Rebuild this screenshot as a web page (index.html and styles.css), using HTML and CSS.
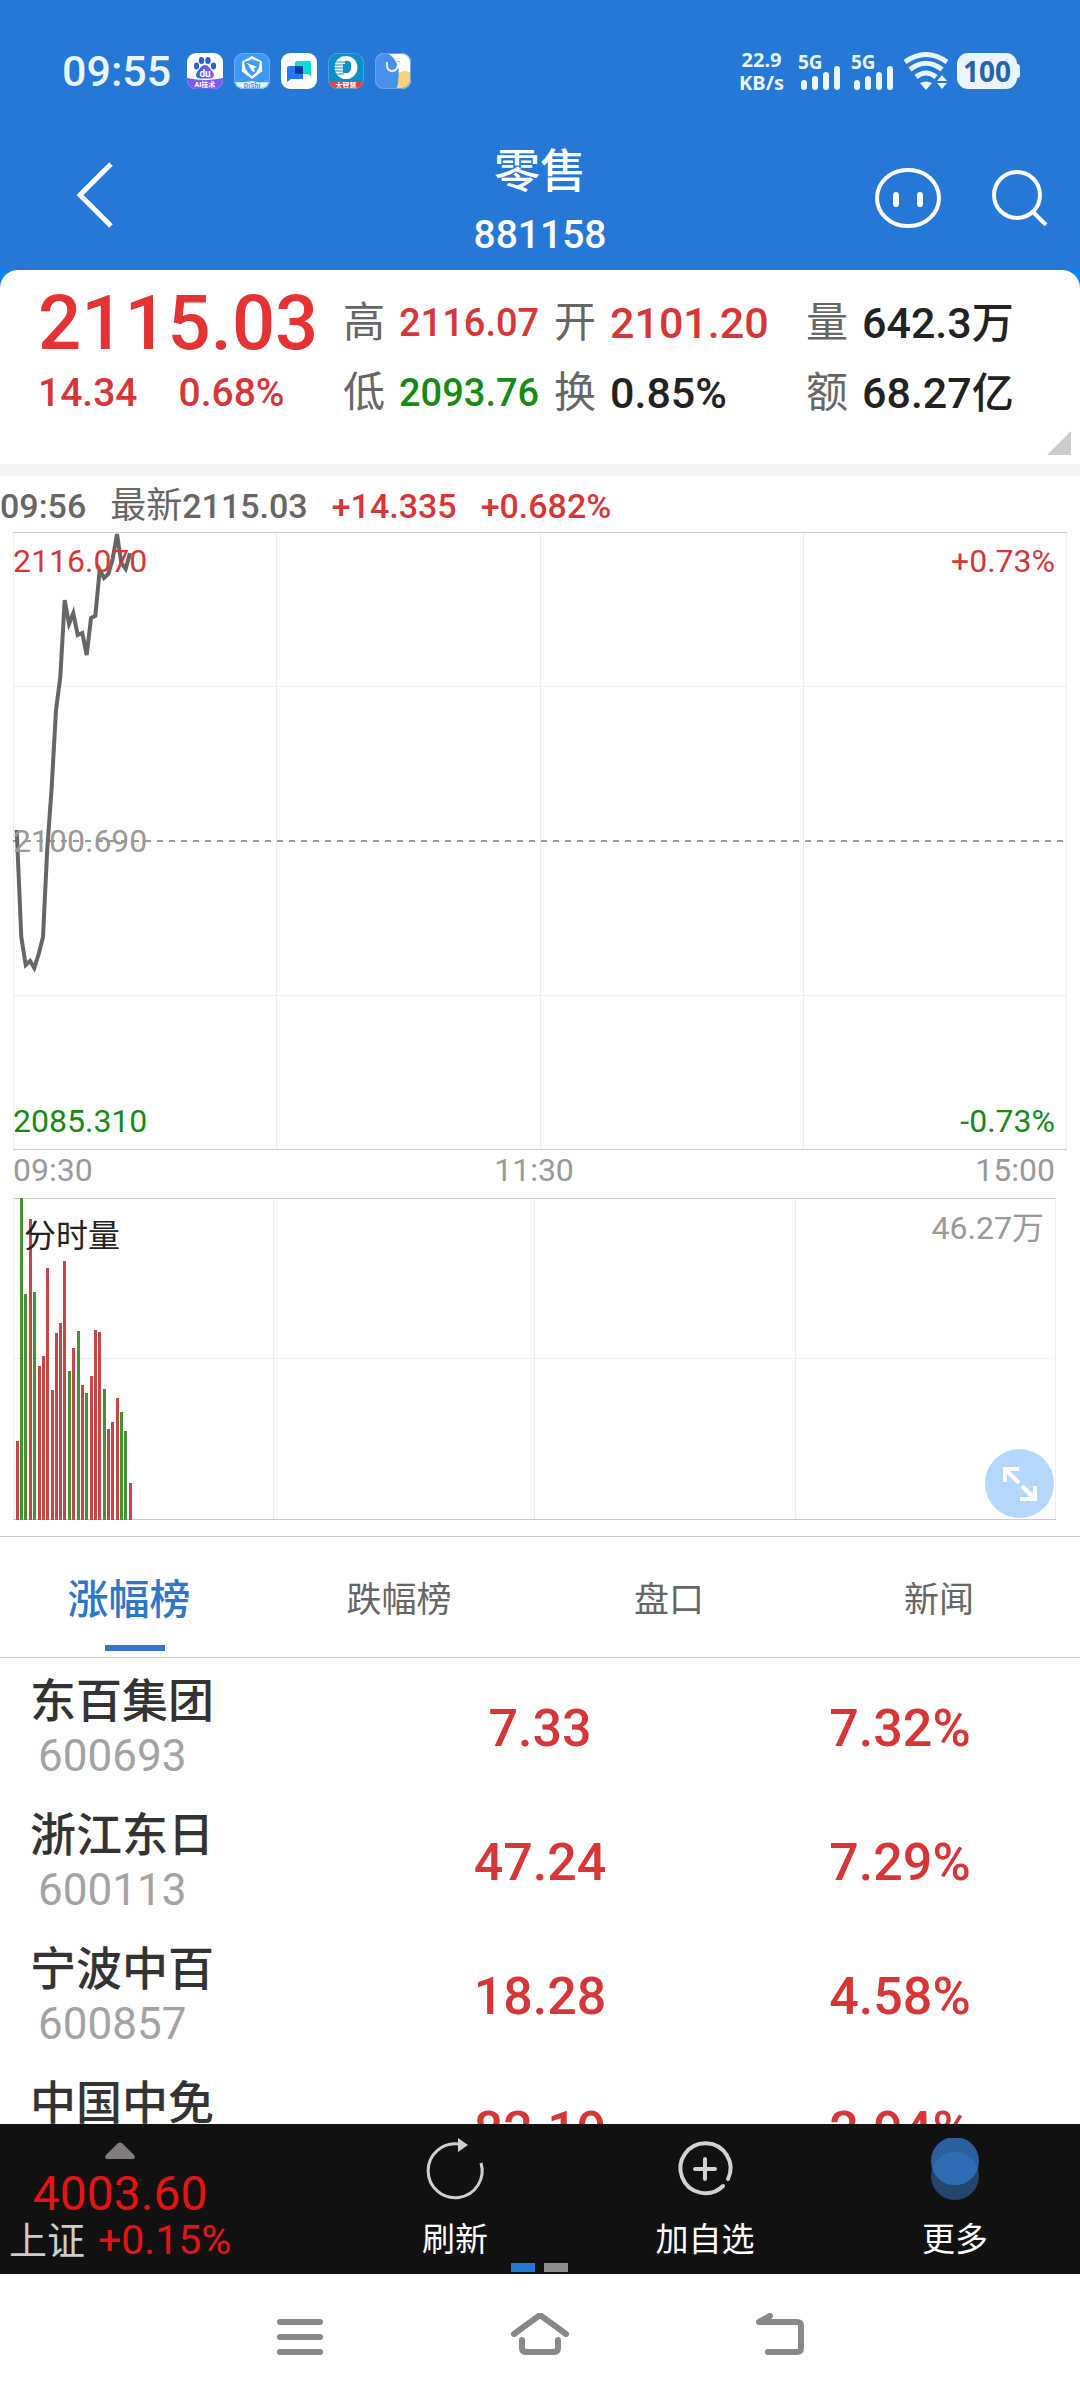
FILE: index.html
```html
<!DOCTYPE html>
<html lang="zh-CN">
<head>
<meta charset="utf-8">
<meta name="viewport" content="width=device-width, initial-scale=1">
<title>零售 881158</title>
<link rel="stylesheet" href="styles.css">
</head>
<body>
<div class="app">
  <header class="top">
    <div class="status">
      <span class="clock">09:55</span>
      <div class="status-apps">
        <svg class="app-icon" viewBox="0 0 36 36"><defs><clipPath id="r"><rect width="36" height="36" rx="9"/></clipPath><linearGradient id="g1"><stop offset="0" stop-color="#2a62e8"/><stop offset="1" stop-color="#9558ef"/></linearGradient></defs><g clip-path="url(#r)"><rect width="36" height="36" fill="#fff"/><g fill="#2d5fd6"><ellipse cx="9.500" cy="13" rx="2.600" ry="3.400"/><ellipse cx="14.500" cy="7.500" rx="2.700" ry="3.500"/><ellipse cx="21" cy="7.500" rx="2.700" ry="3.500"/><ellipse cx="26.500" cy="13" rx="2.600" ry="3.400"/></g><path d="M18 12c4 0 5 4 7.500 6.500s2 7-3 7h-9c-5 0-5.500-4.500-3-7S14 12 18 12z" fill="url(#g1)"/><path d="M0 25q18 4 36 0v11H0z" fill="#7a5cf0"/><text class="t-du" x="18" y="24">du</text><text class="t-tag" x="18" y="34">AI技术</text></g></svg>
        <svg class="app-icon" viewBox="0 0 36 36"><g clip-path="url(#r)"><rect width="36" height="36" fill="#3d98f7"/><path d="M18 3l10 5.500v10L18 26 8 18.500v-10z" fill="#fff"/><path d="M18 6q4 2.500 7.500 2.500Q26 18 18 23q-8-5-7.500-14.500Q14 8.500 18 6z" fill="#3d98f7"/><path d="M13 10l10 4-3 1 1 4-3-1z" fill="#fff"/><path d="M0 29q9 1 18-1 9 2 18 1v7H0z" fill="#eaf6ff"/><text class="t-tag t-blue" x="18" y="35">DiShi</text></g><rect x=".5" y=".5" width="35" height="35" rx="9" fill="none" stroke="#6db2f8"/></svg>
        <svg class="app-icon" viewBox="0 0 36 36"><rect width="36" height="36" rx="9" fill="#fff"/><path d="M14 10q0-2 2-2h12q2 0 2 2v13l-4-2H14z" fill="#06ddd8"/><path d="M6 15q0-2 2-2h14v13q0 0-2 0H10l-4 3z" fill="#2478f2"/><path d="M14 13h8v8h-8z" fill="#023e9c"/></svg>
        <svg class="app-icon" viewBox="0 0 36 36"><g clip-path="url(#r)"><rect width="36" height="36" fill="#0b8fc9"/><circle cx="18" cy="14.500" r="11.500" fill="#fff"/><path d="M17 8q5-1 6 3 1 7-3 9h-5v-9h2z" fill="#0b8fc9"/><path d="M6 9h11M5 12h11M5 15h11M5 18h11M6 21h10" stroke="#0b8fc9" stroke-width="1.200"/><path d="M0 28q18 2 36 0v8H0z" fill="#e8413f"/><text class="t-tag" x="18" y="35">大智慧</text></g><rect x=".5" y=".5" width="35" height="35" rx="9" fill="none" stroke="#4d9fd6"/></svg>
        <svg class="app-icon" viewBox="0 0 36 36"><g clip-path="url(#r)"><rect width="36" height="36" fill="#fff"/><circle cx="30" cy="30" r="12" fill="#f9d27c"/><path d="M0 0h12c10 5 16 18 8 36H0z" fill="#4a90ee"/><path d="M18 36c-3-6-2-12 4-14q3 7-1 14z" fill="#3a9bdc"/><path d="M12 9q-1 9 5 9 5 0 6-6" fill="none" stroke="#e8f2ff" stroke-width="2"/><path d="M22 8l3 1" stroke="#8ab" /></g><rect x=".5" y=".5" width="35" height="35" rx="9" fill="none" stroke="#6aa4ea"/></svg>
      </div>
      <div class="status-right">
        <div class="netspeed"><span>22.9</span><span>KB/s</span></div>
        <svg class="signal" viewBox="0 0 44 50"><text class="t-5g" x="0" y="23">5G</text><path d="M6 37v4M17 33v8M28 29v12M39 23v18" stroke="#e9f5ff" stroke-width="6" stroke-linecap="round"/></svg>
        <svg class="signal" viewBox="0 0 44 50"><text class="t-5g" x="0" y="23">5G</text><path d="M6 37v4M17 33v8M28 29v12M39 23v18" stroke="#e9f5ff" stroke-width="6" stroke-linecap="round"/></svg>
        <svg class="wifi" viewBox="0 0 44 38"><path d="M1 10Q22-5 43 10M6 17.500Q22 5 38 17.500M12 25q10-8 20 0" fill="none" stroke="#e9f5ff" stroke-width="5"/><path d="M16 31q6-3 12 0l-6 7zM33 29l5-6 5 6zM33 31l5 6 5-6z" fill="#e9f5ff"/></svg>
        <span class="battery">100</span>
      </div>
    </div>
    <div class="titlebar">
      <button class="icon-btn back" aria-label="返回"><svg width="36" height="66" viewBox="0 0 36 66"><path d="M34 2L3 33l31 31" fill="none" stroke="#fff" stroke-width="5"/></svg></button>
      <div class="titles"><h1>零售</h1><p>881158</p></div>
      <div class="tools">
        <button class="icon-btn" aria-label="助手"><svg width="66" height="60" viewBox="0 0 66 60"><rect x="2" y="2" width="62" height="56" rx="30" ry="28" fill="none" stroke="#fff" stroke-width="4"/><path d="M21 27v9M45 27v9" stroke="#fff" stroke-width="6" stroke-linecap="round"/></svg></button>
        <button class="icon-btn" aria-label="搜索"><svg width="56" height="56" viewBox="0 0 56 56"><circle cx="25" cy="25" r="23" fill="none" stroke="#fff" stroke-width="4"/><path d="M41 42l13 13" stroke="#fff" stroke-width="4"/></svg></button>
      </div>
    </div>
  </header>

  <section class="quote-wrap">
    <div class="quote">
      <div class="last">
        <div class="price">2115.03</div>
        <div class="change"><span>14.34</span><span>0.68%</span></div>
      </div>
      <dl><div><dt>高</dt><dd class="up small">2116.07</dd></div><div><dt>低</dt><dd class="down small">2093.76</dd></div></dl>
      <dl><div><dt>开</dt><dd class="up">2101.20</dd></div><div><dt>换</dt><dd>0.85%</dd></div></dl>
      <dl><div><dt>量</dt><dd>642.3<span class="unit">万</span></dd></div><div><dt>额</dt><dd>68.27<span class="unit">亿</span></dd></div></dl>
      <svg class="corner" viewBox="0 0 24 24"><path d="M24 0v24H0z" fill="#ccc"/></svg>
    </div>
  </section>

  <div class="tick"><span>09:56</span><span><span class="cjk">最新</span>2115.03</span><span class="up">+14.335</span><span class="up">+0.682%</span></div>

  <section class="chart line-chart">
    <svg class="plot" viewBox="0 0 1054 618" preserveAspectRatio="none">
      <path d="M.5 0V618M263.500 0V618M527.500 0V618M790.500 0V618M1053.500 0V618M0 154.500H1054M0 463.500H1054" stroke="#eee"/>
      <path d="M0 .5H1054M0 617.500H1054" stroke="#ccc"/>
      <path d="M0 309H1050" stroke="#999" stroke-width="2" stroke-dasharray="6 6"/>
      <path d="M3.700 298L8.300 405 12.700 433 17 429 21.300 436 25.700 422 30 405 34.300 316 38.700 255 43 178 47.300 145 51.700 68 56 92 60.300 81 64.700 103 69.300 101 73.700 123 78 86 82.300 84 86.700 38 91 46 95.300 42 99.700 27 104 2 108.300 31 112.700 37 117 21" fill="none" stroke="#666" stroke-width="4"/>
    </svg>
    <div class="labels"><span class="up">2116.070</span><span class="up">+0.73%</span></div>
    <div class="labels"><span>2100.690</span></div>
    <div class="labels"><span class="down">2085.310</span><span class="down">-0.73%</span></div>
  </section>
  <div class="times"><span>09:30</span><span>11:30</span><span>15:00</span></div>

  <section class="chart volume-chart">
    <svg class="plot" viewBox="0 0 1043 322" preserveAspectRatio="none">
      <path d="M.5 0V322M260.500 0V322M521.500 0V322M782.500 0V322M1042.500 0V322M0 160.500H1043" stroke="#eee"/>
      <path d="M0 .5H1043M0 321.500H1043" stroke="#ccc"/>
      <path d="M4.500 322V243M17.500 322V21M26.500 322V168M30.500 322V158M34.500 322V70M39.500 322V192M43.500 322V135M47.500 322V125M51.500 322V63M60.500 322V150M69.500 322V187M78.500 322V178M82.500 322V132M86.500 322V134M95.500 322V231M99.500 322V224M104.500 322V200M117.500 322V285" stroke="#c74545" stroke-width="3"/>
      <path d="M8.500 322V0M12.500 322V96M21.500 322V94M56.500 322V173M65.500 322V133M73.500 322V195M91.500 322V191M108.500 322V214M112.500 322V233" stroke="#45912f" stroke-width="3"/>
    </svg>
    <span class="vol-name">分时量</span>
    <span class="vol-max">46.27<span>万</span></span>
    <button class="expand" aria-label="全屏"><svg width="36" height="36" viewBox="0 0 36 36"><path d="M17 3H3v13M3 3l14 14M33 20v13H18M20 20l13 13" fill="none" stroke="#fff" stroke-width="4"/></svg></button>
  </section>

  <nav class="tabs" role="tablist">
    <button role="tab" aria-selected="true" class="tab active">涨幅榜</button>
    <button role="tab" class="tab">跌幅榜</button>
    <button role="tab" class="tab">盘口</button>
    <button role="tab" class="tab">新闻</button>
  </nav>

  <main class="list">
    <table>
      <tbody>
        <tr><th scope="row"><span class="name">东百集团</span><span class="code">600693</span></th><td>7.33</td><td>7.32%</td></tr>
        <tr><th scope="row"><span class="name">浙江东日</span><span class="code">600113</span></th><td>47.24</td><td>7.29%</td></tr>
        <tr><th scope="row"><span class="name">宁波中百</span><span class="code">600857</span></th><td>18.28</td><td>4.58%</td></tr>
        <tr><th scope="row"><span class="name">中国中免</span></th><td>82.19</td><td>2.94%</td></tr>
      </tbody>
    </table>
  </main>

  <footer class="toolbar">
    <button class="index">
      <svg width="30" height="18" viewBox="0 0 30 18"><path d="M13 1q2-1 4 0l12 12q2 4-1 4H2q-3 0-1-4z" fill="#817d7e"/></svg>
      <span class="index-value">4003.60</span>
      <span class="index-change"><span class="index-name">上证</span>+0.15%</span>
    </button>
    <button class="tool"><svg width="64" height="64" viewBox="0 0 64 64"><path d="M58 25A27 27 0 1 1 36 6" fill="none" stroke="#d0d0d0" stroke-width="3"/><path d="M35 0l10 7-10 7z" fill="#d0d0d0"/></svg><span>刷新</span></button>
    <button class="tool"><svg width="64" height="64" viewBox="0 0 64 64"><path d="M55 41A25 25 0 1 0 50 48" fill="none" stroke="#d3d1d1" stroke-width="4" stroke-linecap="round"/><path d="M32 21v20M22 31h20" stroke="#d3d1d1" stroke-width="4" stroke-linecap="round"/></svg><span>加自选</span></button>
    <button class="tool"><svg width="64" height="64" viewBox="0 0 64 64"><circle cx="32" cy="38" r="24" fill="#24466d"/><circle cx="32" cy="23" r="24" fill="#2b60a0"/><path d="M9.200 30.500a24 24 0 0 1 45.600 0 24 24 0 0 1-45.600 0z" fill="#2e6cb4"/></svg><span>更多</span></button>
    <div class="pager"><i class="on"></i><i></i></div>
  </footer>

  <nav class="sysnav">
    <button aria-label="最近任务"><svg width="60" height="50" viewBox="0 0 60 50"><path d="M10 9h40M10 24h40M10 39h40" stroke="#888" stroke-width="6" stroke-linecap="round"/></svg></button>
    <button aria-label="主屏幕"><svg width="60" height="50" viewBox="0 0 60 50"><path d="M4 21L30 2l26 19M12 27v8q0 4 4 4h28q4 0 4-4v-8" fill="none" stroke="#888" stroke-width="6" stroke-linecap="round" stroke-linejoin="round"/></svg></button>
    <button aria-label="返回"><svg width="60" height="50" viewBox="0 0 60 50"><path d="M20 3L9 9h38q4 0 4 4v22q0 4-4 4H18" fill="none" stroke="#888" stroke-width="6" stroke-linecap="round" stroke-linejoin="round"/></svg></button>
  </nav>
</div>
</body>
</html>
```
FILE: styles.css
```css
* { box-sizing: border-box; }
body { margin: 0; background: #fff; color: #222; font-family: Roboto, "Noto Sans CJK SC", sans-serif; }
h1, p, dl, dd, dt { margin: 0; font-weight: inherit; }
button { border: 0; padding: 0; background: none; font: inherit; color: inherit; cursor: pointer; }
svg { display: block; flex: none; }
.app { display: flex; flex-direction: column; height: 100vh; overflow: hidden; }
.app > * { flex: none; }
.up { color: #d83636; }
.down { color: #128c12; }

/* header */
.top { background: #2578d5; color: #fff; }
.status { display: flex; align-items: center; height: 138px; padding: 3px 63px 0 62px; color: #e9f5ff; }
.clock { font-size: 43px; font-weight: 500; }
.status-apps { display: flex; gap: 11px; margin-left: 16px; }
.app-icon { width: 36px; height: 36px; }
.status-right { display: flex; align-items: center; gap: 9px; margin-left: auto; }
.netspeed { display: flex; flex-direction: column; align-items: center; margin-right: 5px; font: 700 20px/23px "Noto Sans", sans-serif; }
.signal { width: 44px; height: 50px; }
.wifi { width: 44px; height: 38px; }
.battery { position: relative; padding: 0 6px; border-radius: 11px; background: #e9f5ff; color: #2862a8; font: 700 28px/36px "Open Sans", sans-serif; }
.battery::after { content: ""; position: absolute; right: -3px; top: 11px; width: 4px; height: 14px; border-radius: 0 3px 3px 0; background: #e9f5ff; }
.t-du { fill: #fff; font-size: 10px; font-weight: 700; text-anchor: middle; }
.t-tag { fill: #fff; font-size: 7px; font-weight: 700; text-anchor: middle; }
.t-blue { fill: #3d98f7; }
.t-5g { fill: #e9f5ff; font: 700 19px "Noto Sans", sans-serif; }
.titlebar { display: grid; grid-template-columns: 1fr auto 1fr; align-items: start; height: 132px; padding-top: 1px; }
.icon-btn { display: block; }
.back { margin: 23px 0 0 77px; justify-self: start; }
.titles { display: flex; flex-direction: column; gap: 4px; text-align: center; }
.titles h1 { font-size: 46px; font-weight: 500; line-height: 64px; }
.titles p { font-size: 39px; font-weight: 500; line-height: 56px; }
.tools { display: flex; gap: 51px; justify-self: end; align-items: center; margin: 29px 32px 0 0; }

/* quote card */
.quote-wrap { background: #0c82f9; border-bottom: 12px solid #f4f4f4; }
.quote { position: relative; display: grid; grid-template-columns: 305fr 211fr 252fr 274fr; height: 194px; padding: 18px 0 0 38px; background: #fff; border-radius: 18px 18px 0 0; font-weight: 500; line-height: 70px; white-space: nowrap; }
.price { color: #e53333; font-size: 76px; line-height: 70px; }
.change { display: flex; gap: 41px; color: #d83636; font-size: 39px; }
.quote dl > div { display: flex; gap: 14px; height: 70px; }
.quote dt { color: #666; font-size: 42px; font-weight: 400; }
.quote dd { font-size: 43px; }
.quote .small { font-size: 38px; }
.unit { font-size: 42px; }
.corner { position: absolute; right: 9px; bottom: 9px; width: 24px; height: 24px; }

.tick { display: flex; gap: 24px; height: 56px; padding-top: 12px; color: #666; font-size: 34px; font-weight: 500; line-height: 37px; }
.tick .cjk { font-size: 36px; font-weight: 400; }

/* charts */
.chart { position: relative; margin-left: 13px; }
.plot { position: absolute; inset: 0; width: 100%; height: 100%; }
.line-chart { display: flex; flex-direction: column; justify-content: space-between; height: 618px; margin-right: 13px; padding: 13px 12px 13px 0; }
.labels { position: relative; display: flex; justify-content: space-between; color: #999; font-size: 32px; line-height: 32px; }
.times { display: flex; justify-content: space-between; height: 48px; padding: 0 25px 0 13px; color: #999; font-size: 32px; line-height: 40px; }
.volume-chart { display: flex; justify-content: space-between; height: 322px; margin-right: 24px; margin-bottom: 16px; padding: 12px 12px 12px 11px; font-size: 32px; line-height: 36px; }
.vol-name { position: relative; padding-top: 8px; }
.vol-max { position: relative; color: #999; }
.expand { position: absolute; right: 2px; bottom: 2px; display: grid; place-items: center; width: 69px; height: 69px; border-radius: 50%; background: #b4d7fd; }

/* tabs */
.tabs { display: grid; grid-template-columns: repeat(4, 1fr); height: 122px; border-top: 1px solid #ccc; border-bottom: 1px solid #ccc; }
.tab { position: relative; padding: 0 12px 2px 0; color: #666; font-size: 35px; }
.tab.active { color: #2b77c9; font-size: 41px; font-weight: 500; }
.tab.active::after { content: ""; position: absolute; left: 50%; bottom: 6px; width: 60px; height: 6px; margin-left: -30px; background: #2f77c8; }

/* ranking */
.app > .list { flex: 1 1 0; min-height: 0; padding-top: 4px; overflow: hidden; }
table { width: 100%; border-collapse: collapse; table-layout: fixed; }
tr { height: 134px; }
th { padding: 12px 0 0 30px; text-align: left; vertical-align: top; font-weight: 400; line-height: 55px; }
td { padding: 0; text-align: center; color: #d83636; font-size: 52px; font-weight: 500; line-height: 134px; }
.name { display: block; color: #333; font-size: 46px; font-weight: 500; }
.code { display: block; padding-left: 8px; color: #a3a3a3; font-size: 44px; }

/* bottom toolbar */
.toolbar { position: relative; display: grid; grid-template-columns: 330fr 250fr 250fr 250fr; height: 150px; background: #111; color: #fff; }
.index { display: flex; flex-direction: column; align-items: center; justify-self: start; margin-left: 9px; padding-top: 18px; color: #e41414; white-space: nowrap; }
.index-value { margin-top: 11px; font-size: 48px; line-height: 46px; }
.index-change { font-size: 41px; line-height: 46px; }
.index-name { margin-right: 13px; color: #ccc; font-size: 38px; }
.tool { display: flex; flex-direction: column; align-items: center; justify-content: space-between; padding: 14px 0 12px; font-size: 33px; line-height: 44px; }
.pager { position: absolute; left: 50%; bottom: 2px; display: flex; gap: 9px; margin-left: -29px; }
.pager i { width: 24px; height: 9px; background: #8e8e8e; }
.pager .on { background: #2578d5; }

/* system navigation */
.sysnav { display: flex; justify-content: center; gap: 180px; height: 126px; padding-top: 39px; }
.sysnav button { display: block; height: 50px; }
```
